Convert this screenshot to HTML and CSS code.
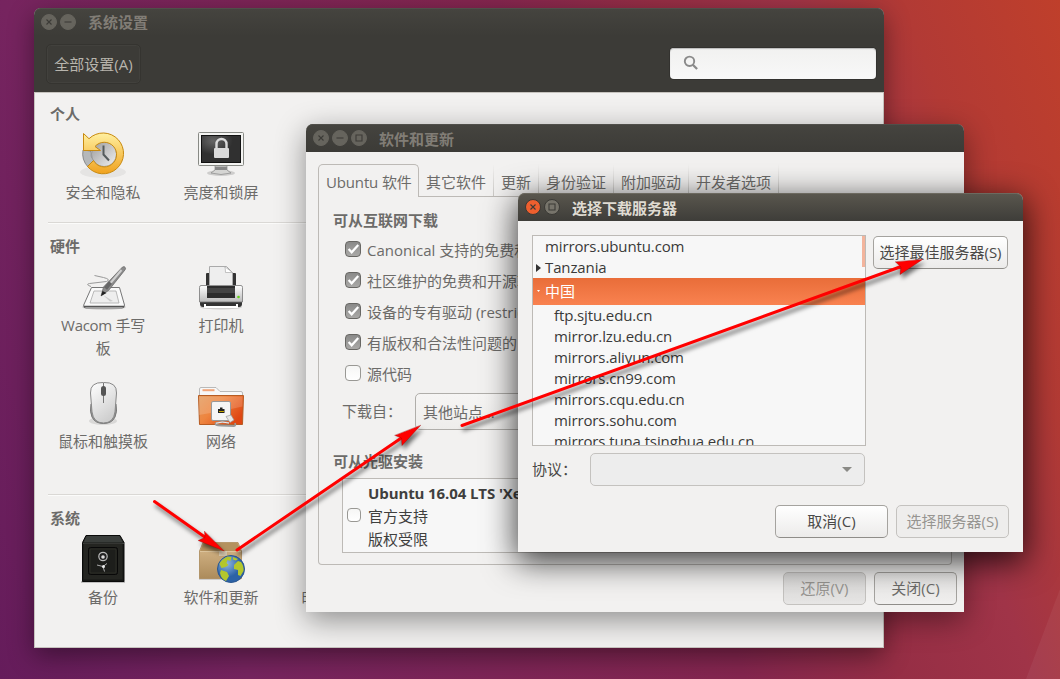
FILE: index.html
```html
<!DOCTYPE html>
<html lang="zh-CN">
<head>
<meta charset="utf-8">
<title>系统设置</title>
<link rel="stylesheet" href="styles.css">
</head>
<body>
<main class="desktop">
  <svg class="facet" width="34" height="90" viewBox="0 0 34 90"><path d="M34 0V90H0Z" fill="#fff" opacity=".05"/></svg>

  <section class="window settings">
    <header class="titlebar">
      <svg class="control" viewBox="0 0 16 16"><circle cx="8" cy="8" r="7.5"/><path d="M5.5 5.5l5 5M10.5 5.5l-5 5"/></svg>
      <svg class="control" viewBox="0 0 16 16"><circle cx="8" cy="8" r="7.5"/><path d="M4.5 8h7"/></svg>
      <h1>系统设置</h1>
    </header>
    <div class="toolbar">
      <button class="all-settings">全部设置(A)</button>
      <div class="search"><svg width="16" height="16" viewBox="0 0 16 16"><circle cx="6.5" cy="6.3" r="4.7" fill="none" stroke="#8a8a8a" stroke-width="1.9"/><path d="M9.8 9.7l4.3 4.3" stroke="#8a8a8a" stroke-width="2.3"/></svg></div>
    </div>
    <div class="settings-body">
      <section class="group">
        <h2>个人</h2>
        <div class="items">
          <div class="item">
            <svg viewBox="0 0 48 48">
              <defs>
                <linearGradient id="gold" x2="0" y2="1"><stop stop-color="#fff0a0"/><stop offset="1" stop-color="#f0a21e"/></linearGradient>
                <linearGradient id="steel" x2="1" y2="1"><stop stop-color="#999"/><stop offset="1" stop-color="#f2f2f2"/></linearGradient>
              </defs>
              <ellipse cx="24" cy="42" rx="23" ry="6" fill="#000" opacity=".05"/>
              <path d="M4 20a20 20 0 0 0 5 17l6-6a12 12 0 0 1-3-10z" fill="#b5b8ba" stroke="#777" stroke-width=".8"/>
              <circle cx="25" cy="24" r="12.5" fill="url(#steel)" stroke="#888" stroke-width=".6"/>
              <path d="M4.500 3.500L10 8.700A20.400 20.400 0 1 1 8.500 36.500L14.500 30.500A12.300 12.300 0 1 0 16 16.500L21.500 20.500H4.500Z" fill="url(#gold)" stroke="#c88a10"/>
              <path d="M24.500 15.500V24.500L30 30.500" fill="none" stroke="#555b5c" stroke-width="2"/>
            </svg>
            <span>安全和隐私</span>
          </div>
          <div class="item">
            <svg viewBox="0 0 48 48">
              <defs><radialGradient id="screen" cx=".3" cy=".2"><stop stop-color="#656565"/><stop offset="1" stop-color="#303030"/></radialGradient></defs>
              <ellipse cx="24" cy="43" rx="14" ry="3" fill="#000" opacity=".15"/>
              <path d="M18 36h12v4l4 3q-10 3-20 0l4-3z" fill="#d5d5d3" stroke="#888" stroke-width=".7"/><path d="M18 37h12v3H18z" fill="#888"/>
              <rect x="1.500" y="2.500" width="45" height="33" rx="1" fill="#f4f4f2" stroke="#888a85"/>
              <rect x="4.500" y="5.500" width="39" height="27" fill="url(#screen)" stroke="#111"/>
              <path d="M19.500 19v-5a5 5 0 0 1 10 0v5" fill="none" stroke="#dadada" stroke-width="2.400"/>
              <rect x="17" y="18" width="15" height="10" rx="1" fill="#dadada"/>
            </svg>
            <span>亮度和锁屏</span>
          </div>
        </div>
      </section>
      <section class="group hardware">
        <h2>硬件</h2>
        <div class="items">
          <div class="item">
            <svg viewBox="0 0 48 48">
              <ellipse cx="25" cy="44" rx="22" ry="3" fill="#000" opacity=".12"/>
              <path d="M12.500 24.500h28l5 17.500q.3 3-2.500 3H7q-3 0-2.300-3z" fill="#fafafa" stroke="#777" stroke-width="1"/>
              <path d="M15 28h22l3 12H11z" fill="#eee" stroke="#aaa" stroke-width=".8"/><path d="M5 43.500h40" stroke="#555" stroke-width="1.300"/>
              <path d="M24 32l10 6-3 .5z" fill="#ccc"/>
              <path d="M12 23.500q-6-2-1.500-3l17-2q5-2-3-4l-9-2" fill="none" stroke="#999"/>
              <path d="M43.500 4q2-1 2.800.6.700 1.200-.3 2.300L30 27 22 33l2.500-9z" fill="#8c8c8c" stroke="#666" stroke-width=".7"/>
              <path d="M42.500 7L29 23" stroke="#d0d0d0" stroke-width="2"/><path d="M31.500 19.500l-5 6" stroke="#666" stroke-width="4"/><path d="M23.500 28l4 2-5.500 3z" fill="#222"/>
            </svg>
            <span class="wacom">Wacom 手写板</span>
          </div>
          <div class="item">
            <svg viewBox="0 0 48 48">
              <defs><linearGradient id="printer" x2="0" y2="1"><stop stop-color="#fff"/><stop offset="1" stop-color="#bbb"/></linearGradient></defs>
              <ellipse cx="24" cy="44" rx="21" ry="2.500" fill="#000" opacity=".15"/>
              <path d="M11 10h-1q-1 0-1 1v13h30V11q0-1-1-1h-1z" fill="#333"/>
              <path d="M12.500 3.500h17l6 6V24h-23z" fill="#eee" stroke="#aaa"/><path d="M27.500 3.500q1 1 1 6h7z" fill="#fff" stroke="#aaa" stroke-width=".7"/>
              <path d="M3 38h42v3q0 3-3 3H6q-3 0-3-3z" fill="#333"/>
              <path d="M4 22.500h40q1.500 0 1.500 2V39h-43V24.500q0-2 1.500-2z" fill="url(#printer)" stroke="#777" stroke-width=".8"/>
              <path d="M10 23h28v12H10z" fill="#2d2d2d"/><path d="M10 25h28v5H10z" fill="#444"/>
              <path d="M8 41v3h32v-3" fill="none" stroke="#fff" stroke-width="2"/><circle cx="41.500" cy="34" r="1.300" fill="#63d21a"/>
            </svg>
            <span>打印机</span>
          </div>
        </div>
        <div class="items second">
          <div class="item">
            <svg viewBox="0 0 48 48">
              <defs><linearGradient id="mouse" x2=".5" y2="1"><stop stop-color="#fff"/><stop offset="1" stop-color="#cfcfcf"/></linearGradient></defs>
              <ellipse cx="24" cy="42" rx="14" ry="4" fill="#000" opacity=".1"/>
              <path d="M12 25q-1.500 8 1 13 3 6.500 11.500 6.500T36 38q2.500-5 1-13z" fill="#999" stroke="#777"/>
              <path d="M24.500 3.500Q38 3 37.500 14L36 33q-1.500 11-11.500 11T13 33L11.500 14Q11 3 24.500 3.500z" fill="url(#mouse)" stroke="#888"/>
              <path d="M24.500 4v20" stroke="#777"/><rect x="22" y="7" width="5" height="10" rx="2.500" fill="#555"/>
            </svg>
            <span>鼠标和触摸板</span>
          </div>
          <div class="item">
            <svg viewBox="0 0 48 48">
              <defs><linearGradient id="folder" x2="1" y2=".6"><stop stop-color="#e29a5c"/><stop offset=".45" stop-color="#ee853f"/><stop offset="1" stop-color="#df4713"/></linearGradient></defs>
              <path d="M2.500 18v-8q0-1.500 1.500-1.500h15l4 4h21q1.500 0 1.500 1.500v4z" fill="#f7f7f7" stroke="#aaa" stroke-width=".8"/><path d="M5.500 11.200h12" stroke="#f1a57a" stroke-width="2"/>
              <path d="M1.500 16.500h45l-1 29h-43z" fill="url(#folder)" stroke="#b65b22"/><path d="M2 17.500h43.500v10Q23 33 2 36z" fill="#fff" opacity=".16"/>
              <rect x="14.500" y="22.500" width="19" height="19" rx="1.500" fill="#f5f5f5" stroke="#999"/>
              <path d="M21 34v-4h2v-1.500h2.500V30h2v4z" fill="#222"/><path d="M22 32.500h5" stroke="#c8a800"/>
              <path d="M29 37.500l5-1.500 3 5-4 2.500z" fill="#e7e7e7" stroke="#999" stroke-width=".7"/><path d="M32 44q-7-2-13 .2-2 2.300 5 2.300l13 .5q2 0 1-3" fill="none" stroke="#999" stroke-width="1.800"/><path d="M32 44q-7-2-13 .2" fill="none" stroke="#eee"/>
            </svg>
            <span>网络</span>
          </div>
        </div>
      </section>
      <section class="group system">
        <h2>系统</h2>
        <div class="items">
          <div class="item">
            <svg viewBox="0 0 48 48">
              <path d="M2 46h44v2H2z" fill="#000" opacity=".2"/>
              <path d="M7 .5h34l4 7v39H3.500v-39z" fill="#171816" stroke="#0a0b0a"/><path d="M7.500 1h33L44 7.500H4.500z" fill="#3a3e3b"/><path d="M4 8.500h41" stroke="#5a5e5b" stroke-width=".7"/>
              <rect x="4.500" y="8.500" width="39" height="36" fill="#242521"/><rect x="9.500" y="12.500" width="29" height="27" rx="2" fill="#1d1e1b" stroke="#080808"/><rect x="11" y="14" width="26" height="24" rx="1" fill="none" stroke="#35362f" stroke-width=".6"/>
              <circle cx="24" cy="21.500" r="4.200" fill="#222" stroke="#bbb" stroke-width="1.200"/><circle cx="24" cy="22" r="1.800" fill="#ddd"/>
              <path d="M18 30l6 1.500 4-3M24 31.500l1.500 5" fill="none" stroke="#aaa" stroke-width="1"/><circle cx="24.500" cy="31.500" r="1.500" fill="#eee"/>
            </svg>
            <span>备份</span>
          </div>
          <div class="item">
            <svg viewBox="0 0 48 48">
              <defs>
                <linearGradient id="box" x2="0" y2="1"><stop stop-color="#d9ba8c"/><stop offset="1" stop-color="#ac8b5b"/></linearGradient>
                <radialGradient id="globe" cx=".35" cy=".3"><stop stop-color="#8fb5e0"/><stop offset="1" stop-color="#2c62a6"/></radialGradient>
              </defs>
              <path d="M2 43h42v2H2z" fill="#000" opacity=".15"/>
              <path d="M6 7.500h35l3.500 8.500v27.500h-42V16z" fill="url(#box)" stroke="#a98959" stroke-width=".8"/><path d="M6.500 8h34l3.500 8.500H3z" fill="#b4925f"/><path d="M3 16.500h41" stroke="#e5ceaa" stroke-width=".8"/>
              <path d="M22 16h8v5h-8z" fill="#ddd2bd" opacity=".8"/>
              <circle cx="34" cy="34" r="13.500" fill="url(#globe)" stroke="#2a568f"/>
              <path d="M22.500 29q2-5 8-7.500l4 .5-1 4-3-1-1 3 2 2-3 2-4 1zM24 35l6 2 2 4-3 5q-5-2-6-8zM37 30l4-4 3 1q3 4 2.500 9l-3 5-2.500-1 0-5-4-1zM36 22l5 2-2 1.500-3-1z" fill="#b4c72c"/>
            </svg>
            <span>软件和更新</span>
          </div>
          <div class="item"><svg viewBox="0 0 48 48"></svg><span>时间和日期</span></div>
        </div>
      </section>
    </div>
  </section>

  <section class="window software">
    <header class="titlebar">
      <svg class="control" viewBox="0 0 16 16"><circle cx="8" cy="8" r="7.5"/><path d="M5.500 5.500l5 5M10.500 5.500l-5 5"/></svg>
      <svg class="control" viewBox="0 0 16 16"><circle cx="8" cy="8" r="7.5"/><path d="M4.500 8h7"/></svg>
      <svg class="control" viewBox="0 0 16 16"><circle cx="8" cy="8" r="7.5"/><path d="M5 5h6v6H5z"/></svg>
      <h1>软件和更新</h1>
    </header>
    <div class="software-body">
      <nav class="tabs">
        <span class="tab active">Ubuntu 软件</span><span class="tab">其它软件</span><span class="tab">更新</span><span class="tab">身份验证</span><span class="tab">附加驱动</span><span class="tab">开发者选项</span><span class="tab-rest"></span>
      </nav>
      <div class="panel">
        <h2>可从互联网下载</h2>
        <div class="checks">
          <div class="check"><i class="box on"><svg viewBox="0 0 16 16"><path d="M3 8l3.500 3.700L14 3.500"/></svg></i>Canonical 支持的免费和</div>
          <div class="check"><i class="box on"><svg viewBox="0 0 16 16"><path d="M3 8l3.500 3.700L14 3.500"/></svg></i>社区维护的免费和开源软</div>
          <div class="check"><i class="box on"><svg viewBox="0 0 16 16"><path d="M3 8l3.500 3.700L14 3.500"/></svg></i>设备的专有驱动 (restricted)</div>
          <div class="check"><i class="box on"><svg viewBox="0 0 16 16"><path d="M3 8l3.500 3.700L14 3.500"/></svg></i>有版权和合法性问题的</div>
          <div class="check"><i class="box"></i>源代码</div>
        </div>
        <div class="download"><span>下载自：</span><div class="select">其他站点…</div></div>
        <h2 class="optical">可从光驱安装</h2>
        <div class="disc">
          <i class="box"></i>
          <div><strong>Ubuntu 16.04 LTS 'Xenial</strong><p>官方支持</p><p>版权受限</p></div>
        </div>
      </div>
      <footer><button class="button off">还原(V)</button><button class="button dim">关闭(C)</button></footer>
    </div>
  </section>

  <section class="window dialog">
    <header class="titlebar">
      <svg class="control close" viewBox="0 0 16 16"><circle cx="8" cy="8" r="7.500"/><path d="M5.500 5.500l5 5M10.500 5.500l-5 5"/></svg>
      <svg class="control" viewBox="0 0 16 16"><circle cx="8" cy="8" r="7.500"/><path d="M5 5h6v6H5z"/></svg>
      <h1>选择下载服务器</h1>
    </header>
    <div class="dialog-body">
      <div class="chooser">
        <div class="list">
          <div class="rows">
            <p>mirrors.ubuntu.com</p>
            <p class="parent"><svg width="5" height="8" viewBox="0 0 5 8"><path d="M0 0L5 4 0 8z" fill="#333"/></svg>Tanzania</p>
            <p class="parent selected"><svg width="5" height="3" viewBox="0 0 5 3"><path d="M1 0h3L2.500 2z" fill="#fff"/></svg>中国</p>
            <p class="child">ftp.sjtu.edu.cn</p>
            <p class="child">mirror.lzu.edu.cn</p>
            <p class="child">mirrors.aliyun.com</p>
            <p class="child">mirrors.cn99.com</p>
            <p class="child">mirrors.cqu.edu.cn</p>
            <p class="child">mirrors.sohu.com</p>
            <p class="child">mirrors.tuna.tsinghua.edu.cn</p>
          </div>
          <i class="thumb"></i>
        </div>
        <button class="button best">选择最佳服务器(S)</button>
      </div>
      <div class="protocol"><span>协议：</span><div class="combo"><svg width="10" height="5" viewBox="0 0 10 5"><path d="M0 0h10L5 5z" fill="#8a8a86"/></svg></div></div>
      <footer><button class="button">取消(C)</button><button class="button off">选择服务器(S)</button></footer>
    </div>
  </section>

  <svg class="arrows" width="1060" height="679" viewBox="0 0 1060 679">
    <g fill="#ff0000" stroke="#ff0000" stroke-linecap="round">
      <path d="M154.500 501.500L209 540" stroke-width="3"/><path d="M224 551L198.200 540.500 205 537.500 204.500 531.500z" stroke="#900" stroke-width=".4"/>
      <path d="M237 550L405 435.500" stroke-width="3"/><path d="M420.500 425.500L402 445.500 401.500 438 395 435.500z" stroke="#900" stroke-width=".4"/>
      <path d="M462 425.500L904 265.500" stroke-width="3"/><path d="M922.500 259.500L900 274.500 901 267 895.500 262z" stroke="#900" stroke-width=".4"/>
    </g>
  </svg>
</main>
</body>
</html>
```

FILE: styles.css
```css
* { box-sizing: border-box; }
body { margin: 0; }
h1, h2, p { margin: 0; }
.desktop {
  position: relative;
  width: 1060px;
  height: 679px;
  overflow: hidden;
  background: linear-gradient(70deg, #651c5b 0%, #76245f 19%, #85264f 57%, #962e45 69%, #a03448 79%, #b23a35 88%, #bf3f2b 100%);
  font: 15px/23px "Open Sans", "Noto Sans CJK SC", sans-serif;
  color: #6c6b69;
  white-space: nowrap;
}
.facet { position: absolute; right: 0; bottom: 0; }
.arrows { position: absolute; left: 0; top: 0; filter: drop-shadow(2px 4px 2px rgba(0, 0, 0, .55)); }

.window { position: absolute; border-radius: 7px 7px 0 0; background: #f2f1f0; }
.settings { left: 34px; top: 8px; width: 850px; height: 640px; box-shadow: 0 8px 26px rgba(0, 0, 0, .42); }
.software { left: 306px; top: 124px; width: 658px; height: 488px; box-shadow: 0 8px 30px rgba(0, 0, 0, .42); }
.dialog { left: 518px; top: 193px; width: 505px; height: 359px; color: #4a4947; box-shadow: 0 8px 32px 2px rgba(0, 0, 0, .75); }

.titlebar {
  display: flex;
  align-items: center;
  height: 28px;
  padding-left: 7px;
  gap: 3px;
  border-radius: 7px 7px 0 0;
  background: linear-gradient(#45443f, #3c3b37);
  box-shadow: inset 0 1px #504f4a;
}
.titlebar h1 { margin-left: 9px; padding-top: 1px; font-size: 15px; line-height: 28px; font-weight: 700; color: #817d76; }
.settings .titlebar h1 { padding-top: 0; }
.control { width: 16px; height: 16px; }
.control circle { fill: #66645d; stroke: #66645d; }
.control path { fill: none; stroke: #3c3b37; stroke-width: 1.1; }
.dialog .titlebar { background: linear-gradient(#5a574e, #3e3d39); box-shadow: inset 0 1px #6c695f; }
.dialog h1 { color: #dfdbd2; }
.dialog .control circle { fill: #77746b; stroke: #3a3935; }
.dialog .close circle { fill: #ee5f2e; }

.toolbar {
  display: flex;
  justify-content: space-between;
  height: 56px;
  padding: 8px 8px 0 12px;
  background: #3c3b37;
}
.all-settings {
  width: 95px;
  height: 40px;
  padding: 0;
  border: 1px solid #353430;
  border-radius: 5px;
  background: #3c3b37;
  box-shadow: inset 0 0 0 1px #42413d;
  color: #b8b5ad;
  font: inherit;
}
.search {
  width: 206px;
  height: 31px;
  margin-top: 4px;
  padding: 7px 13px;
  border-radius: 4px;
  background: linear-gradient(#f1f1f0, #f8f8f8);
  box-shadow: 0 0 0 1px #33322f, inset 0 1px 1px #bbb;
}
.search svg { display: block; }
.settings-body {
  height: 556px;
  border: 1px solid #c6c3be;
  padding: 11px 13px 0;
}
.group { height: 118px; }
.group h2 { padding-left: 2px; font-size: 15px; line-height: 20px; font-weight: 700; }
.items { display: flex; margin-top: 6px; margin-left: -4px; }
.item { display: flex; flex-direction: column; align-items: center; width: 118px; gap: 3px; padding: 0 14px; }
.item svg { width: 48px; height: 48px; }
.item .wacom { white-space: normal; text-align: center; letter-spacing: -.3px; }
.hardware { height: 272px; padding-top: 13px; border-top: 1px solid #dad8d5; box-shadow: inset 0 1px #fbfbfa; }
.hardware .items { margin-top: 7px; }
.hardware .second { margin-top: 19px; }
.system { padding-top: 13px; border-top: 1px solid #dad8d5; box-shadow: inset 0 1px #fbfbfa; }
.system .items { margin-top: 7px; }

.software-body { padding: 12px 7px 0 12px; }
.tabs { display: flex; height: 33px; margin-right: 5px; }
.tab {
  padding: 7px 8px 0 7px;
  border-bottom: 1px solid #bdbab6;
  background: linear-gradient(transparent, #c9c7c4) right / 1px 100% no-repeat;
  line-height: 23px;
}
.tab.active { width: 101px; padding: 6px 7px 0; border: 1px solid #bdbab6; border-bottom: 0; border-radius: 5px 5px 0 0; background: none; letter-spacing: -.15px; }
.tab-rest { flex: 1; border-bottom: 1px solid #bdbab6; }
.panel { height: 368px; margin-right: 5px; padding: 12px 11px 0 14px; border: 1px solid #bdbab6; border-top: 0; border-radius: 0 0 4px 4px; }
.panel h2 { font-size: 15px; line-height: 23px; font-weight: 700; }
.checks { padding: 3px 0 0 12px; }
.check { display: flex; align-items: center; height: 31px; gap: 6px; }
.box { display: block; width: 16px; height: 16px; margin-top: -4px; border: 1px solid #999894; border-radius: 4px; background: linear-gradient(#f6f6f5, #fff); }
.box.on { border-color: #686764; background: linear-gradient(#8a8a89, #aaa9a7); }
.box svg { display: block; width: 14px; height: 14px; }
.box path { fill: none; stroke: #fff; stroke-width: 2.6; }
.download { display: flex; align-items: center; height: 38px; margin: 2px 0 0 9px; }
.download > span { width: 73px; }
.select { width: 240px; height: 37px; padding-left: 7px; border: 1px solid #b0aeaa; border-radius: 5px; line-height: 36px; background: linear-gradient(#f6f5f4, #eeedeb); }
.panel .optical { margin-top: 20px; }
.disc { display: flex; gap: 7px; height: 75px; margin: 5px 0 0 9px; padding: 3px 4px; border: 1px solid #bdbab6; background: #f7f7f7; color: #3f3f3e; }
.disc .box { width: 14px; height: 14px; margin-top: 26px; }
.disc strong { display: block; font-weight: 700; letter-spacing: -.1px; }
footer { display: flex; justify-content: flex-end; gap: 8px; }
.software footer { margin-top: 7px; }
.button {
  height: 33px;
  width: 113px;
  padding: 0;
  border: 1px solid #a5a39f;
  border-bottom-color: #8f8d89;
  border-radius: 5px;
  background: linear-gradient(#fff, #ecebea);
  color: #4a4947;
  font: inherit;
}
.button.dim { color: #6c6b69; background: linear-gradient(#e9e8e7, #f0efee); }
.button.off { color: #979591; border-color: #c4c2bf; background: #eeedec; }
.software footer .button { width: 83px; }
.software footer .off { background: linear-gradient(#dad9d8, #e6e5e4); }

.dialog-body { padding: 14px 14px 0; }
.chooser { display: flex; gap: 7px; }
.list { position: relative; width: 334px; height: 211px; overflow: hidden; border: 1px solid #bdbab6; background: #f7f7f7; color: #3a3a39; }
.rows { letter-spacing: -.12px; }
.rows p { height: 21px; padding-left: 12px; line-height: 21px; }
.rows .parent { display: flex; align-items: center; gap: 4px; padding-left: 3px; }
.rows .selected { height: 27px; color: #fff; background: linear-gradient(#e96d39, #f98250); }
.rows .child { padding-left: 21px; }
.thumb { position: absolute; top: 0; right: 0; width: 3px; height: 31px; background: #f3b49c; }
.button.best { width: 135px; margin-top: 1px; }
.protocol { display: flex; align-items: center; height: 33px; margin-top: 7px; }
.protocol span { width: 58px; }
.combo { display: flex; align-items: center; justify-content: flex-end; width: 275px; height: 33px; padding-right: 12px; border: 1px solid #c4c2bf; border-radius: 5px; background: #ededed; }
.dialog footer { margin-top: 19px; }
```
